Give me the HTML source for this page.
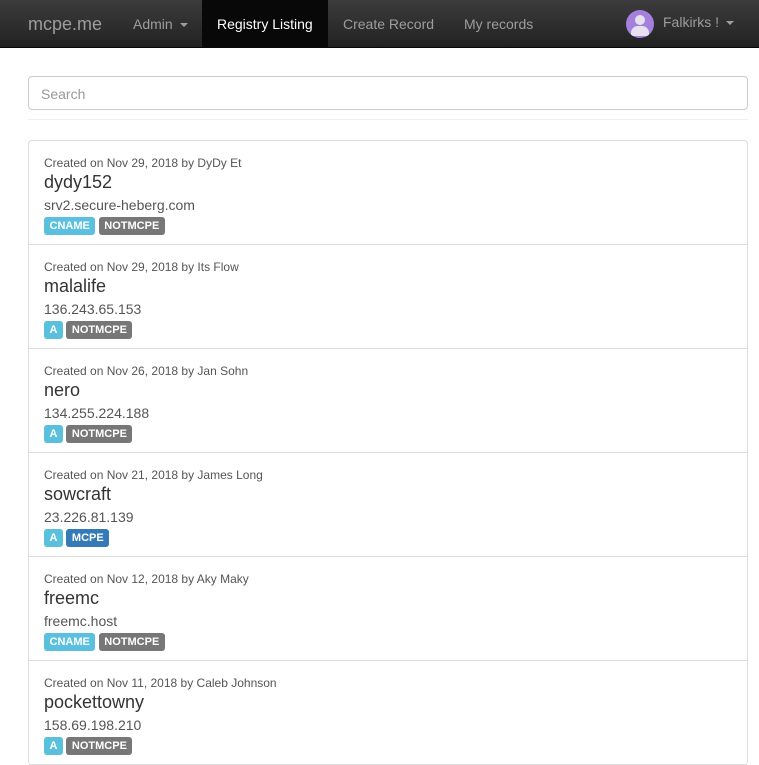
<!DOCTYPE html>
<html><head><style>
*{box-sizing:border-box}
body{margin:0;font-family:"Liberation Sans",Helvetica,Arial,sans-serif;color:#333;background:#fff;width:759px;height:759px;overflow:hidden}
.nav{height:48px;background:linear-gradient(#3c3c3c,#222);border-bottom:1px solid #080808;position:relative}
.nav a{position:absolute;top:0;height:48px;line-height:48px;color:#9d9d9d;font-size:14px;text-decoration:none}
.brand{font-size:18px!important;left:28px}
.active{background:#080808;color:#fff!important;padding:0 15px}
.caret{display:inline-block;width:0;height:0;border-top:4px solid;border-left:4px solid transparent;border-right:4px solid transparent;vertical-align:middle;margin-left:3px}
.search{position:absolute;left:28px;top:76px;width:720px;height:34px;border:1px solid #ccc;border-radius:4px;padding:0 12px;line-height:34px;color:#999;font-size:14px}
.hr{position:absolute;left:28px;top:119px;width:720px;border-top:1px solid #eee}
.card{position:absolute;left:28px;top:140px;width:720px;border:1px solid #ddd;border-radius:4px;border-bottom:none}
.item{height:104px;border-bottom:1px solid #ddd;padding:15px 15px 0}
.meta{font-size:12px;line-height:14px;color:#555}
.name{font-size:18px;line-height:22px;margin-top:1px;color:#333}
.host{font-size:14px;line-height:20px;margin-top:2px;color:#555}
.lb{display:inline-block;font-size:11px;font-weight:bold;color:#fff;padding:0 5.5px;height:18px;line-height:18px;border-radius:3px;margin-right:-1px;margin-top:2px}
.i{background:#5bc0de}.g{background:#777}.p{background:#337ab7}
</style></head><body>
<div class="nav">
<a class="brand">mcpe.me</a>
<a style="left:133px">Admin <span class="caret"></span></a>
<a class="active" style="left:202px">Registry Listing</a>
<a style="left:343px">Create Record</a>
<a style="left:464px">My records</a>
<span style="position:absolute;left:626px;top:10px;width:28px;height:28px;border-radius:50%;background:#a57fdc;overflow:hidden">
<span style="position:absolute;left:9px;top:5px;width:10px;height:10px;border-radius:50%;background:#e6e0ef"></span>
<span style="position:absolute;left:5px;top:16px;width:18px;height:10px;border-radius:7px 7px 2px 2px;background:#e6e0ef"></span></span>
<a style="left:663px;top:-2px">Falkirks ! <span class="caret"></span></a>
</div>
<div class="search">Search</div>
<div class="hr"></div>
<div class="card">
<div class="item"><div class="meta">Created on Nov 29, 2018 by DyDy Et</div><div class="name">dydy152</div><div class="host">srv2.secure-heberg.com</div><span class="lb i">CNAME</span> <span class="lb g">NOTMCPE</span></div>
<div class="item"><div class="meta">Created on Nov 29, 2018 by Its Flow</div><div class="name">malalife</div><div class="host">136.243.65.153</div><span class="lb i">A</span> <span class="lb g">NOTMCPE</span></div>
<div class="item"><div class="meta">Created on Nov 26, 2018 by Jan Sohn</div><div class="name">nero</div><div class="host">134.255.224.188</div><span class="lb i">A</span> <span class="lb g">NOTMCPE</span></div>
<div class="item"><div class="meta">Created on Nov 21, 2018 by James Long</div><div class="name">sowcraft</div><div class="host">23.226.81.139</div><span class="lb i">A</span> <span class="lb p">MCPE</span></div>
<div class="item"><div class="meta">Created on Nov 12, 2018 by Aky Maky</div><div class="name">freemc</div><div class="host">freemc.host</div><span class="lb i">CNAME</span> <span class="lb g">NOTMCPE</span></div>
<div class="item"><div class="meta">Created on Nov 11, 2018 by Caleb Johnson</div><div class="name">pockettowny</div><div class="host">158.69.198.210</div><span class="lb i">A</span> <span class="lb g">NOTMCPE</span></div>
</div>
</body></html>
